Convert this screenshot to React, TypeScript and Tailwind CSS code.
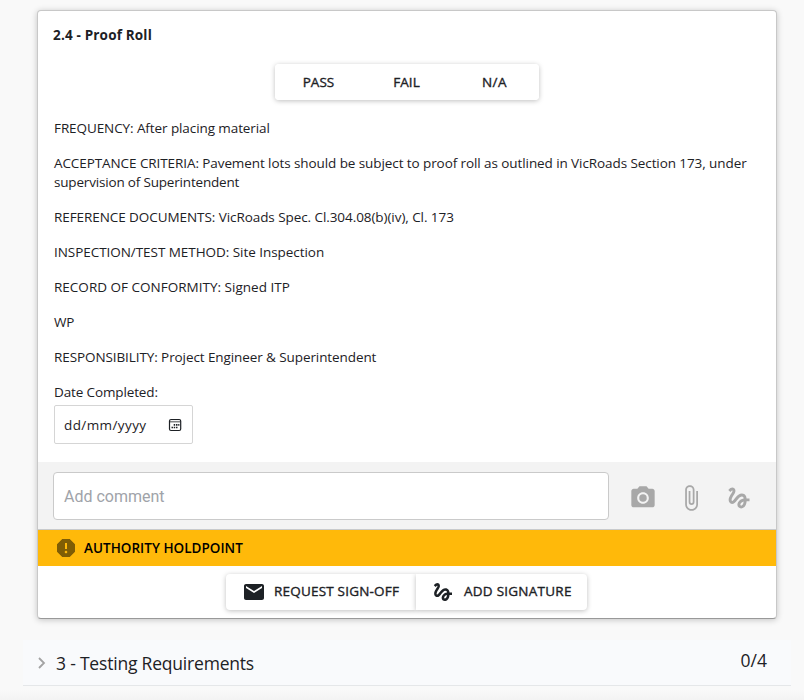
import type { ReactNode } from "react";
import { MdPhotoCamera, MdAttachFile, MdGesture, MdEmail, MdReport } from "react-icons/md";

const details = [
  { text: "FREQUENCY: After placing material", style: "tracking-[-0.09px]" },
  { text: "REFERENCE DOCUMENTS: VicRoads Spec. Cl.304.08(b)(iv), Cl. 173", style: "tracking-[-0.07px]" },
  { text: "INSPECTION/TEST METHOD: Site Inspection", style: "tracking-[-0.05px]" },
  { text: "RECORD OF CONFORMITY: Signed ITP", style: "tracking-[0.01px]" },
  { text: "WP", style: "tracking-[-0.15px]" },
  { text: "RESPONSIBILITY: Project Engineer & Superintendent", style: "tracking-[-0.09px]" },
];

function Line({ text, style }: { text: string; style: string }) {
  return (
    <p className="whitespace-nowrap">
      <span className={style}>{text}</span>
    </p>
  );
}

function Choice({ children, className }: { children: ReactNode; className: string }) {
  return (
    <button className={`h-9 w-[88px] bg-white pr-px text-center [-webkit-text-stroke:0.35px_#1d2125] ${className}`}>{children}</button>
  );
}

function CalendarIcon() {
  return (
    <svg width="14" height="14" viewBox="0 0 14 14" fill="none" stroke="#1d2125">
      <rect x="1.5" y="1.5" width="11.2" height="11" rx="1.5" strokeWidth="1.2" />
      <path d="M1.5 3.7h11" strokeWidth="1.6" strokeOpacity="0.55" />
      <path d="M5.7 6.9h1.5M8 6.9h1.5M10.2 6.9h1.2M3.5 9.5h1.5M5.7 9.5h1.5M8 9.5h1.5" strokeWidth="1.6" />
    </svg>
  );
}

export default function App() {
  return (
    <div className="h-[700px] w-[804px] overflow-hidden bg-[#f9f9f9] pt-[10px] font-['Open_Sans','Noto_Sans',sans-serif] text-[13.5px] leading-[19px] text-[#1d2125]">
      <main className="ml-[37px] h-[609px] w-[740px] overflow-hidden rounded border border-[#c8c8c8] border-b-[#999] bg-white shadow-[0_1px_6px_rgba(0,0,0,0.22)]">
        <div className="h-[451px] px-[15px] pt-[15px]">
          <h2 className="font-bold"><span className="tracking-[0.17px]">2.4 - Proof Roll</span></h2>
          <div className="mt-[19px] ml-[222px] flex w-[264px] rounded-sm shadow-[0_1px_5px_rgba(0,0,0,0.25)]">
            <Choice className="rounded-l-sm tracking-[0.05px]">PASS</Choice>
            <Choice className="tracking-[0.1px]">FAIL</Choice>
            <Choice className="rounded-r-sm tracking-[0.5px]">N/A</Choice>
          </div>
          <div className="mt-[19px] ml-px flex flex-col gap-4">
            <Line {...details[0]} />
            <div>
              <Line text="ACCEPTANCE CRITERIA: Pavement lots should be subject to proof roll as outlined in VicRoads Section 173, under" style="tracking-[-0.085px]" />
              <Line text="supervision of Superintendent" style="tracking-[-0.18px]" />
            </div>
            {details.slice(1).map((d) => <Line key={d.text} {...d} />)}
            <div>
              <Line text="Date Completed:" style="tracking-[-0.13px]" />
              <div className="mt-[3px] flex h-[39px] w-[139px] items-center justify-between rounded-xs border border-[#d5d5d5] pt-px pr-[10px] pl-[9px]">
                <span className="tracking-[0.4px]">dd/mm/yyyy</span>
                <CalendarIcon />
              </div>
            </div>
          </div>
        </div>
        <div className="flex h-[68px] items-center border-b border-[#c8cacc] bg-[#f3f3f3] pl-[15px]">
          <div className="flex h-12 w-[556px] items-center rounded border border-[#cacaca] bg-white pt-[2px] pl-[10px] font-['Roboto',sans-serif] text-base text-[#a0a3a9]">Add comment</div>
          <div className="mt-[4px] ml-5 flex items-center gap-5 text-[#a8a8a8]">
            <MdPhotoCamera size={28} />
            <MdAttachFile size={28} />
            <MdGesture size={28} />
          </div>
        </div>
        <div className="flex h-9 items-center gap-[6px] bg-[#ffb90a] pl-4 text-black">
          <MdReport size={24} className="text-[#7f5d05]" />
          <span className="font-semibold tracking-[0.02px]">AUTHORITY HOLDPOINT</span>
        </div>
        <div className="mt-2 ml-[188px] flex h-9 w-[361px]">
          <button className="flex w-[190px] items-center rounded-l-sm bg-white pl-4 shadow-[0_1px_5px_rgba(0,0,0,0.25)]">
            <MdEmail size={24} className="mr-2" />
            <span className="mb-[2px] whitespace-nowrap tracking-[0.2px] [-webkit-text-stroke:0.35px_#1d2125]">REQUEST SIGN-OFF</span>
          </button>
          <button className="relative flex w-[171px] items-center rounded-r-sm bg-white pl-[15px] shadow-[0_1px_5px_rgba(0,0,0,0.25)]">
            <MdGesture size={24} className="mr-[9px]" />
            <span className="mb-[2px] whitespace-nowrap tracking-[0.25px] [-webkit-text-stroke:0.35px_#1d2125]">ADD SIGNATURE</span>
          </button>
        </div>
      </main>
      <section className="mt-[21px] ml-[23px] flex h-[46px] w-[768px] items-center border-b border-[#e5e7e9] bg-[#f9fafc] text-[17.5px]">
        <svg width="8" height="12" viewBox="0 0 8 12" className="ml-[15px]" fill="none" stroke="#a3a3a3" strokeWidth="1.8"><path d="M1 1l5 5-5 5" /></svg>
        <span className="mt-[2px] ml-[10px] tracking-[-0.2px]">3 - Testing Requirements</span>
        <span className="mr-6 mb-[5px] ml-auto">0/4</span>
      </section>
      <div className="mt-1 h-3 bg-linear-to-b from-[#f9f9f9] to-[#f2f2f2]" />
    </div>
  );
}
